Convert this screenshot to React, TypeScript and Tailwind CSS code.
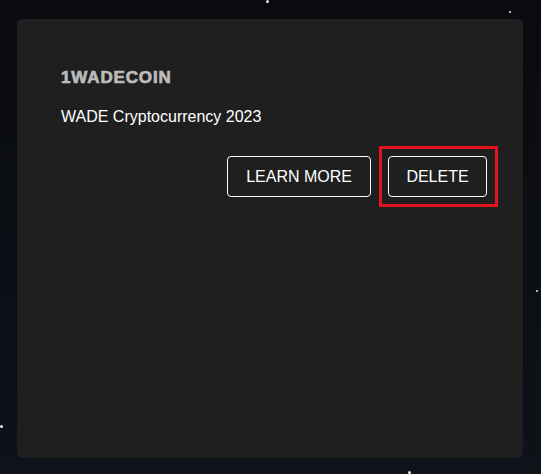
export default function App() {
  const stars = [
    { x: 266, y: 0, s: 3 },
    { x: 509, y: 11, s: 2 },
    { x: 536, y: 290, s: 2 },
    { x: 0, y: 425, s: 3 },
    { x: 408, y: 471, s: 3 },
  ];

  return (
    <div className="relative h-[474px] w-[541px] overflow-hidden bg-gradient-to-b from-[#090b10] to-[#0f121a] pt-[19px] pl-[17px] font-['Liberation_Sans',Arial,sans-serif]">
      {/* Stars */}
      {stars.map((st, i) => (
        <span
          key={i}
          className="absolute rounded-full bg-white/90"
          style={{ left: st.x, top: st.y, width: st.s, height: st.s }}
        />
      ))}

      {/* Card */}
      <div className="relative flex h-[439px] w-[506px] flex-col rounded-[5px] bg-[#1f1f1f] pt-[49px] pl-[44px] pr-[36px]">
        <h2 className="text-[17px] leading-[20px] font-bold tracking-[0.05em] text-[#bcbcbc] [-webkit-text-stroke:0.7px_#bcbcbc]">
          1WADECOIN
        </h2>
        <p className="mt-[17px] text-[16px] leading-[24px] text-white">
          WADE Cryptocurrency 2023
        </p>

        <div className="mt-[27px] flex justify-end gap-[17px]">
          <button className="h-[41px] rounded-[4px] border border-white px-[18px] text-[16px] text-white">
            LEARN MORE
          </button>
          <div className="relative">
            <button className="h-[41px] w-[99px] rounded-[4px] border border-white text-[16px] text-white">
              DELETE
            </button>
            {/* Highlight frame */}
            <span className="pointer-events-none absolute -top-[10px] -bottom-[10px] -left-[9px] -right-[11px] border-[3px] border-[#e3141e]" />
          </div>
        </div>
      </div>
    </div>
  );
}
